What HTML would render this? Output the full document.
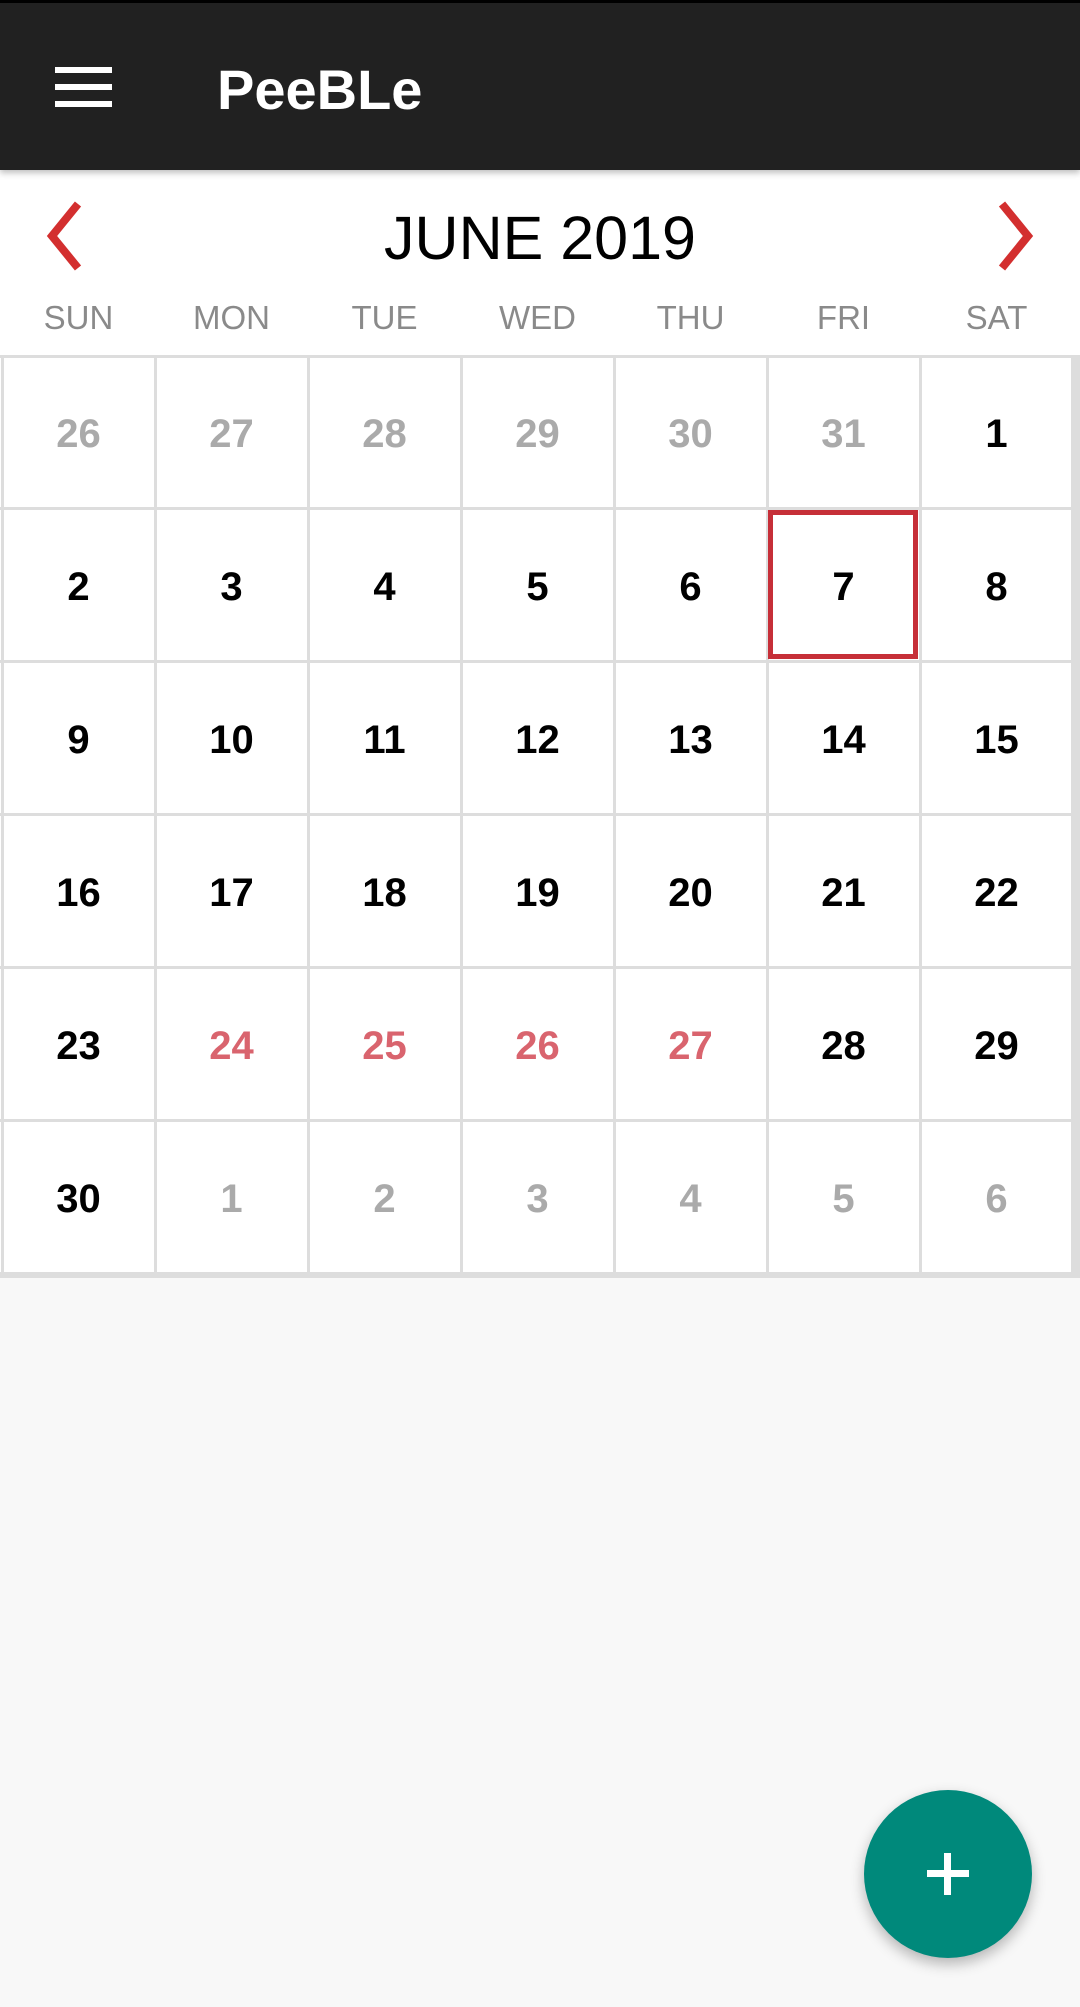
<!DOCTYPE html>
<html><head><meta charset="utf-8"><style>
*{margin:0;padding:0;box-sizing:border-box}
body{width:1080px;height:2007px;background:#f8f8f8;position:relative;overflow:hidden;font-family:"Liberation Sans",Arial,sans-serif}
.hdr{position:absolute;left:0;top:0;width:1080px;height:170px;background:#212121;border-top:3px solid #000;box-shadow:0 3px 6px rgba(0,0,0,.25);z-index:2}
.bar{position:absolute;left:55px;width:57px;height:6px;background:#fff}
.title{position:absolute;left:217px;top:52px;font-size:56px;font-weight:bold;color:#fff;line-height:70px}
.cal{position:absolute;left:0;top:170px;width:1080px;height:1108px;background:#fff}
.month{position:absolute;left:0;width:1080px;top:203px;text-align:center;font-size:61px;color:#000;line-height:70px}
.dn{position:absolute;top:298px;width:153px;text-align:center;font-size:33px;color:#8a8a8a;line-height:40px}
.v{position:absolute;top:355px;width:3px;height:920px;background:#ddd}
.h{position:absolute;left:0;width:1072px;height:3px;background:#ddd}
.n{position:absolute;width:153px;text-align:center;font-size:40px;font-weight:bold;line-height:50px;color:#000}
.g{color:#aaa}.r{color:#d9646e}
.fab{position:absolute;left:864px;top:1790px;width:168px;height:168px;border-radius:50%;background:#00897b;box-shadow:0 6px 14px rgba(0,0,0,.28)}
</style></head><body>
<div class="hdr">
<div class="bar" style="top:64px"></div><div class="bar" style="top:81px"></div><div class="bar" style="top:98px"></div>
<div class="title">PeeBLe</div>
</div>
<div class="cal"></div>
<svg style="position:absolute;left:40px;top:200px" width="50" height="72"><polyline points="38,4 12,36 38,68" fill="none" stroke="#d32f2f" stroke-width="8"/></svg>
<svg style="position:absolute;left:990px;top:200px" width="50" height="72"><polyline points="12,4 38,36 12,68" fill="none" stroke="#d32f2f" stroke-width="8"/></svg>
<div class="month">JUNE 2019</div>
<div class="dn" style="left:2px">SUN</div><div class="dn" style="left:155px">MON</div><div class="dn" style="left:308px">TUE</div><div class="dn" style="left:461px">WED</div><div class="dn" style="left:614px">THU</div><div class="dn" style="left:767px">FRI</div><div class="dn" style="left:920px">SAT</div>
<div style="position:absolute;left:1071px;top:355px;width:9px;height:923px;background:#ddd"></div>
<div style="position:absolute;left:0;top:1272px;width:1080px;height:6px;background:#ddd"></div>
<div class="v" style="left:1px"></div><div class="v" style="left:154px"></div><div class="v" style="left:307px"></div><div class="v" style="left:460px"></div><div class="v" style="left:613px"></div><div class="v" style="left:766px"></div><div class="v" style="left:919px"></div>
<div class="h" style="top:355px"></div><div class="h" style="top:507px"></div><div class="h" style="top:660px"></div><div class="h" style="top:813px"></div><div class="h" style="top:966px"></div><div class="h" style="top:1119px"></div>
<div style="position:absolute;left:768px;top:510px;width:150px;height:149px;border:5px solid #c62f38"></div>
<div class="n g" style="left:2px;top:409px">26</div><div class="n g" style="left:155px;top:409px">27</div><div class="n g" style="left:308px;top:409px">28</div><div class="n g" style="left:461px;top:409px">29</div><div class="n g" style="left:614px;top:409px">30</div><div class="n g" style="left:767px;top:409px">31</div><div class="n" style="left:920px;top:409px">1</div>
<div class="n" style="left:2px;top:562px">2</div><div class="n" style="left:155px;top:562px">3</div><div class="n" style="left:308px;top:562px">4</div><div class="n" style="left:461px;top:562px">5</div><div class="n" style="left:614px;top:562px">6</div><div class="n" style="left:767px;top:562px">7</div><div class="n" style="left:920px;top:562px">8</div>
<div class="n" style="left:2px;top:715px">9</div><div class="n" style="left:155px;top:715px">10</div><div class="n" style="left:308px;top:715px">11</div><div class="n" style="left:461px;top:715px">12</div><div class="n" style="left:614px;top:715px">13</div><div class="n" style="left:767px;top:715px">14</div><div class="n" style="left:920px;top:715px">15</div>
<div class="n" style="left:2px;top:868px">16</div><div class="n" style="left:155px;top:868px">17</div><div class="n" style="left:308px;top:868px">18</div><div class="n" style="left:461px;top:868px">19</div><div class="n" style="left:614px;top:868px">20</div><div class="n" style="left:767px;top:868px">21</div><div class="n" style="left:920px;top:868px">22</div>
<div class="n" style="left:2px;top:1021px">23</div><div class="n r" style="left:155px;top:1021px">24</div><div class="n r" style="left:308px;top:1021px">25</div><div class="n r" style="left:461px;top:1021px">26</div><div class="n r" style="left:614px;top:1021px">27</div><div class="n" style="left:767px;top:1021px">28</div><div class="n" style="left:920px;top:1021px">29</div>
<div class="n" style="left:2px;top:1174px">30</div><div class="n g" style="left:155px;top:1174px">1</div><div class="n g" style="left:308px;top:1174px">2</div><div class="n g" style="left:461px;top:1174px">3</div><div class="n g" style="left:614px;top:1174px">4</div><div class="n g" style="left:767px;top:1174px">5</div><div class="n g" style="left:920px;top:1174px">6</div>
<div class="fab"><div style="position:absolute;left:63px;top:80px;width:42px;height:7px;background:#fff"></div><div style="position:absolute;left:80px;top:63px;width:7px;height:42px;background:#fff"></div></div>
</body></html>
